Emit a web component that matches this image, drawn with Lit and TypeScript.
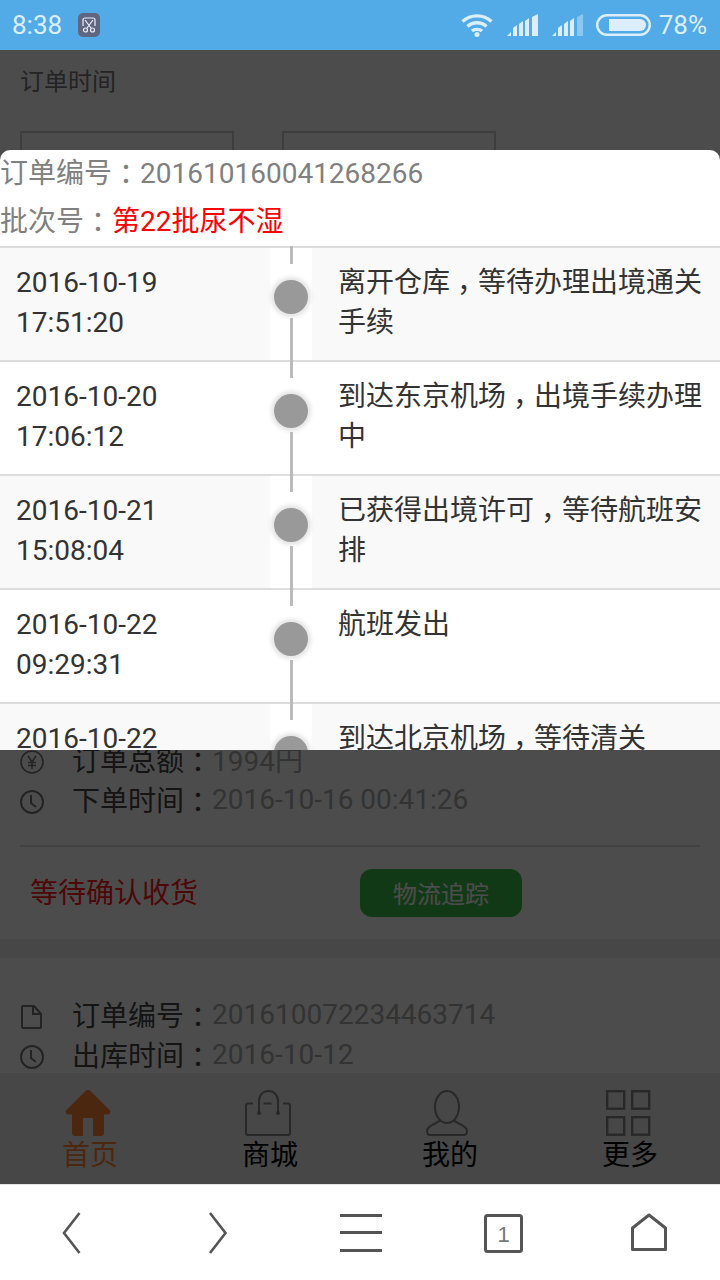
import { html, css, LitElement } from "lit";
import { customElement } from "lit/decorators.js";

const TRACK = [
  { date: "2016-10-19", time: "17:51:20", text: "离开仓库，等待办理出境通关手续" },
  { date: "2016-10-20", time: "17:06:12", text: "到达东京机场，出境手续办理中" },
  { date: "2016-10-21", time: "15:08:04", text: "已获得出境许可，等待航班安排" },
  { date: "2016-10-22", time: "09:29:31", text: "航班发出" },
  { date: "2016-10-22", time: "", text: "到达北京机场，等待清关" },
];

// full-width punctuation sits centred in the reference: halve the glyph, pad both sides
const punct = (text: string) =>
  text.split(/([，：])/).map((part) =>
    part === "，" || part === "：" ? html`<span class="p">${part}</span>` : part
  );

const clock = html`<svg class="ico" viewBox="0 0 24 24" fill="none" stroke="currentColor" stroke-width="2">
  <circle cx="12" cy="12" r="11"></circle>
  <path d="M11 5v8l5 4"></path>
</svg>`;

const yen = html`<svg class="ico" viewBox="0 0 24 24" fill="none" stroke="currentColor" stroke-width="1.6">
  <circle cx="12" cy="12" r="11"></circle>
  <path d="M8 6l4 6 4-6M12 12v7M8 12.500h8M8 15.500h8"></path>
</svg>`;

const file = html`<svg class="ico" viewBox="0 0 24 24" fill="none" stroke="currentColor" stroke-width="2">
  <path d="M3 1h11l7 8v13a1 1 0 0 1-1 1H3a1 1 0 0 1-1-1V2a1 1 0 0 1 1-1zM13 1v8h8"></path>
</svg>`;

@customElement("app-root")
export class AppRoot extends LitElement {
  static styles = css`
    :host {
      display: block;
      width: 720px;
      height: 1280px;
      overflow: hidden;
      font-family: Roboto, "Noto Sans CJK SC", sans-serif;
      font-size: 28px;
      color: #333;
    }
    .p {
      font-feature-settings: "halt";
      padding: 0 0.25em;
    }
    .status {
      height: 50px;
      background: #52abe7;
      color: #dceefb;
      font-size: 26px;
      display: flex;
      align-items: center;
      padding: 0 13px 0 12px;
    }
    .status .clock {
      width: 66px;
    }
    .status .right {
      margin-left: auto;
      display: flex;
      align-items: center;
    }
    .web {
      position: relative;
      height: 1134px;
      display: flex;
      flex-direction: column;
      overflow: hidden;
    }
    .page {
      flex: 1;
      min-height: 0;
      overflow: hidden;
      background: #fff;
    }
    .title {
      line-height: 64px;
      padding-left: 20px;
      font-size: 24px;
      color: #777;
    }
    .dates {
      display: flex;
      gap: 48px;
      padding: 17px 20px 0;
    }
    .dates div {
      width: 214px;
      height: 60px;
      box-sizing: border-box;
      border: 2px solid #ccc;
    }
    .summary {
      margin-top: 548px;
      padding: 0 20px;
    }
    .line {
      display: flex;
      align-items: center;
      height: 40px;
      color: #555;
    }
    .line b {
      font-weight: 400;
      color: #444;
    }
    .line .ico {
      width: 24px;
      height: 24px;
      margin: 6px 28px 0 0;
      color: #777;
      flex: none;
    }
    .line .val {
      color: #aaa;
    }
    .foot {
      margin-top: 26px;
      border-top: 2px solid #ddd;
      display: flex;
      align-items: center;
      height: 94px;
      box-sizing: border-box;
      padding: 0 0 0 10px;
    }
    .foot .state {
      width: 330px;
      color: #ff1a1a;
      margin-top: -4px;
    }
    .foot .btn {
      width: 162px;
      height: 48px;
      box-sizing: border-box;
      padding-bottom: 2px;
      border-radius: 12px;
      background: #3fc04c;
      color: #fff;
      font-size: 24px;
      display: flex;
      align-items: center;
      justify-content: center;
    }
    .band {
      height: 19px;
      background: #eee;
    }
    .second {
      margin-top: 36px;
    }
    .nav {
      height: 111px;
      flex: none;
      background: #eee;
      display: grid;
      grid-template-columns: repeat(4, 1fr);
    }
    .nav div {
      display: flex;
      flex-direction: column;
      align-items: center;
      padding-top: 17px;
      color: #000;
      line-height: 36px;
    }
    .nav svg {
      width: 46px;
      height: 46px;
      margin: 0 4px 2px 0;
      color: #888;
    }
    .nav .on,
    .nav .on svg {
      color: #ff8436;
    }
    .shade {
      position: absolute;
      inset: 0;
      background: rgba(0, 0, 0, 0.7);
    }
    .modal {
      position: absolute;
      left: 0;
      top: 100px;
      width: 720px;
      height: 600px;
      overflow: hidden;
      background: #fff;
      border-radius: 10px 10px 0 0;
    }
    .head {
      height: 96px;
      color: #808080;
      line-height: 48px;
    }
    .head em {
      font-style: normal;
      color: #f00;
    }
    .row {
      height: 114px;
      box-sizing: border-box;
      border-top: 2px solid #ddd;
      display: grid;
      grid-template-columns: 270px 42px 1fr;
      line-height: 40px;
      color: #333;
    }
    .row:nth-child(odd) {
      background: #f9f9f9;
    }
    .when {
      padding: 15px 0 0 16px;
    }
    .what {
      padding: 15px 16px 0 26px;
    }
    .rail {
      background: #fff;
      display: flex;
      flex-direction: column;
      align-items: center;
    }
    .rail i {
      width: 3px;
      background: #bbb;
      display: block;
    }
    .rail .top {
      height: 18px;
      margin-top: -2px;
      flex: none;
    }
    .rail .bottom {
      flex: 1;
    }
    .rail .dot {
      width: 34px;
      height: 34px;
      margin: 16px 0 4px;
      flex: none;
      border-radius: 50%;
      background: #999;
      box-shadow: 0 0 4px 3px #e4e4e4;
    }
    .bar {
      height: 96px;
      box-sizing: border-box;
      border-top: 1px solid #e5e5e5;
      background: #fff;
      display: grid;
      grid-template-columns: repeat(5, 1fr);
      align-items: center;
      color: #555;
    }
    .bar svg {
      display: block;
      margin: 0 auto;
    }
  `;

  private statusIcons() {
    const bars = (last: string) => html`<svg width="32" height="23" viewBox="0 0 32 23">
      <path fill="currentColor" d="M0 22l4-4v4zM6 22v-8l4-3v11zM12 22V10l4-3v15z"></path>
      <path fill="currentColor" d="M18 22V7l4-3v18z"></path>
      <path fill=${last} d="M25 22V3l6-3v22z"></path>
    </svg>`;
    return html`<div class="right">
      <svg width="32" height="24" viewBox="0 0 32 24" fill="none" stroke="currentColor" stroke-width="3.400">
        <path d="M1.500 8.500c8-7.500 21-7.500 29 0M6.500 13.500c5.500-5 13.500-5 19 0M11 18c2.500-2.200 7.500-2.200 10 0"></path>
        <circle cx="16" cy="21.500" r="2.500" fill="currentColor" stroke="none"></circle>
      </svg>
      <span style="width:14px"></span>
      ${bars("currentColor")}
      <span style="width:13px"></span>
      ${bars("#8cc7f0")}
      <span style="width:12px"></span>
      <svg width="55" height="22" viewBox="0 0 55 22">
        <rect x="1.200" y="1.200" width="52.600" height="19.600" rx="9.800" fill="none" stroke="currentColor" stroke-width="2.400"></rect>
        <path fill="currentColor" d="M13 5h31a6 6 0 0 1 0 12H13z"></path>
      </svg>
      <span style="margin-left:8px">78%</span>
    </div>`;
  }

  private navIcons() {
    return [
      html`<svg viewBox="0 0 46 46" fill="currentColor">
        <path d="M23 0c1 0 2 .4 3 1.400L44.500 20c1.500 1.500 1 4.500-1.500 4.500H39V43c0 2-1 3-3 3h-8V28H18v18h-8c-2 0-3-1-3-3V24.500H3C.5 24.500 0 21.500 1.500 20L20 1.400C21 .4 22 0 23 0z"></path>
      </svg>`,
      html`<svg viewBox="0 0 46 46" fill="none" stroke="currentColor" stroke-width="2">
        <path d="M8 13.500H3a2 2 0 0 0-2 2V43a2 2 0 0 0 2 2h40a2 2 0 0 0 2-2V15.500a2 2 0 0 0-2-2h-5"></path>
        <path d="M14 23V11c0-6 4-10 9.500-10S33 5 33 11v12M18.500 13.500h8"></path>
        <circle cx="14" cy="23" r="2" fill="currentColor" stroke="none"></circle>
        <circle cx="33" cy="23" r="2" fill="currentColor" stroke="none"></circle>
      </svg>`,
      html`<svg viewBox="0 0 46 46" fill="none" stroke="currentColor" stroke-width="2">
        <ellipse cx="22" cy="17" rx="12" ry="16"></ellipse>
        <path d="M15 30.500C12 34 2 35 2 41c0 3 1 4 3 4h34c2 0 3-1 3-4 0-6-10-7-13-10.500"></path>
      </svg>`,
      html`<svg viewBox="0 0 46 46" fill="none" stroke="currentColor" stroke-width="2.400">
        <rect x="2.200" y="1.200" width="17" height="17.500"></rect>
        <rect x="27.200" y="1.200" width="17" height="17.500"></rect>
        <rect x="2.200" y="27.200" width="17" height="17.500"></rect>
        <rect x="27.200" y="27.200" width="17" height="17.500"></rect>
      </svg>`,
    ];
  }

  render() {
    const labels = ["首页", "商城", "我的", "更多"];
    const icons = this.navIcons();
    return html`
      <div class="status">
        <span class="clock">8:38</span>
        <svg width="22" height="24" viewBox="0 0 22 24">
          <rect width="22" height="24" rx="5" fill="#5f6680"></rect>
          <g fill="none" stroke="#eef" stroke-width="1.200">
            <path d="M5 13V7a2 2 0 0 1 2-2h8a2 2 0 0 1 2 2v6"></path>
            <path d="M7 7l6 8M15 7l-6 8"></path>
            <circle cx="7.500" cy="17" r="2"></circle>
            <circle cx="14.500" cy="17" r="2"></circle>
          </g>
        </svg>
        ${this.statusIcons()}
      </div>

      <div class="web">
        <div class="page">
          <div class="title">订单时间</div>
          <div class="dates"><div></div><div></div></div>
          <div class="summary">
            <div class="line">${yen}<b>订单总额${punct("：")}</b><span class="val">1994円</span></div>
            <div class="line">${clock}<b>下单时间${punct("：")}</b><span class="val">2016-10-16 00:41:26</span></div>
            <div class="foot">
              <span class="state">等待确认收货</span>
              <span class="btn">物流追踪</span>
            </div>
          </div>
          <div class="band"></div>
          <div class="summary second">
            <div class="line">${file}<b>订单编号${punct("：")}</b><span class="val">201610072234463714</span></div>
            <div class="line">${clock}<b>出库时间${punct("：")}</b><span class="val">2016-10-12</span></div>
          </div>
        </div>
        <div class="nav">
          ${labels.map(
            (label, i) => html`<div class=${i === 0 ? "on" : ""}>${icons[i]}<span>${label}</span></div>`
          )}
        </div>

        <div class="shade"></div>
        <div class="modal">
          <div class="head">
            <div>订单编号${punct("：")}201610160041268266</div>
            <div>批次号${punct("：")}<em>第22批尿不湿</em></div>
          </div>
          <div>
            ${TRACK.map(
              (t) => html`<div class="row">
                <div class="when">${t.date}<br />${t.time}</div>
                <div class="rail"><i class="top"></i><i class="dot"></i><i class="bottom"></i></div>
                <div class="what">${punct(t.text)}</div>
              </div>`
            )}
          </div>
        </div>
      </div>

      <div class="bar">
        <svg width="24" height="42" viewBox="0 0 24 42" fill="none" stroke="#555" stroke-width="2.600">
          <path d="M19.500 1L4 21l15.500 20"></path>
        </svg>
        <svg width="24" height="42" viewBox="0 0 24 42" fill="none" stroke="#555" stroke-width="2.600">
          <path d="M6 1l15.500 20L6 41"></path>
        </svg>
        <svg width="44" height="38" viewBox="0 0 44 38" fill="#555">
          <rect x="2" y="0" width="42" height="3"></rect>
          <rect x="2" y="17" width="42" height="3"></rect>
          <rect x="2" y="35" width="42" height="3"></rect>
        </svg>
        <svg width="40" height="40" viewBox="0 0 40 40">
          <rect x="1.500" y="2.500" width="36" height="36" rx="2" fill="none" stroke="#555" stroke-width="3"></rect>
          <text x="19.500" y="28.500" font-size="22" text-anchor="middle" fill="#777" font-family="Liberation Sans, sans-serif">1</text>
        </svg>
        <svg width="40" height="40" viewBox="0 0 40 40" fill="none" stroke="#555" stroke-width="3" stroke-linejoin="round">
          <path d="M21 2l16.500 13v21.500h-33V15z"></path>
        </svg>
      </div>
    `;
  }
}
